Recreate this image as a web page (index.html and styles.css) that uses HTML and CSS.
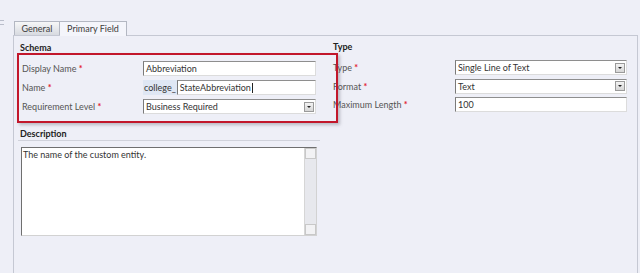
FILE: index.html
```html
<!DOCTYPE html>
<html>
  <head>
    <title>Field Properties - Primary Field</title>
    <link rel="stylesheet" href="styles.css">
  </head>
  <body>

	<div class="tabstrip">
		<div class="grip"></div>
		<div class="tab first">General</div>
		<div class="tab active">Primary Field</div>
	</div>

	<div class="panel">
		<div class="columns">
			<div class="col col-left">
				<div class="section-title">Schema</div>
				<div class="row">
					<div class="label">Display Name <span class="req">*</span></div>
					<div class="input">Abbreviation</div>
				</div>
				<div class="row">
					<div class="label">Name <span class="req">*</span></div>
					<div class="input-group">
						<span class="prefix">college_</span>
						<div class="input">StateAbbreviation<span class="caret"></span></div>
					</div>
				</div>
				<div class="row">
					<div class="label">Requirement Level <span class="req">*</span></div>
					<div class="select"><span>Business Required</span><span class="drop"></span></div>
				</div>

				<div class="section-title desc-title">Description</div>
				<div class="textarea">
					<div class="textarea-text">The name of the custom entity.</div>
					<div class="scrollbar">
						<div class="sb-btn"></div>
						<div class="sb-btn"></div>
					</div>
				</div>
			</div>

			<div class="col col-right">
				<div class="section-title plain">Type</div>
				<div class="row">
					<div class="label">Type <span class="req">*</span></div>
					<div class="select"><span>Single Line of Text</span><span class="drop"></span></div>
				</div>
				<div class="row">
					<div class="label">Format <span class="req">*</span></div>
					<div class="select"><span>Text</span><span class="drop"></span></div>
				</div>
				<div class="row">
					<div class="label">Maximum Length <span class="req">*</span></div>
					<div class="input">100</div>
				</div>
			</div>
		</div>

		<!-- red annotation box drawn over the schema fields -->
		<div class="highlight"></div>
	</div>

  </body>
</html>
```

FILE: styles.css
```css
      body { margin: 0; background: #eeeff7; font-family: Lato, "Open Sans", sans-serif; font-size: 9px; color: #555; overflow: hidden; }

      .tabstrip { display: flex; align-items: flex-start; padding-top: 21px; height: 14px; }
      .grip { width: 4px; height: 3px; margin-top: -1px; border-top: 1px solid #b9bdca; border-bottom: 1px solid #b9bdca; }
      .tab { box-sizing: border-box; width: 46px; height: 14px; line-height: 14px; text-align: center; border: 1px solid #b3b7c2; border-bottom: none; color: #3c3c3c; background: linear-gradient(#f7f7f8, #d7dae0); }
      .tab.first { margin-left: 10px; }
      .tab.active { width: 67px; height: 15px; background: #f4f5fb; border-left: none; position: relative; z-index: 1; }

      .panel { position: relative; margin-left: 13px; width: 623px; height: 237px; border: 1px solid #c5c8d3; border-bottom: none; }
      .columns { display: flex; gap: 13px; padding: 6px 0 0 4px; }
      .col-left { width: 302px; }
      .col-right { width: 296px; margin-top: -1px; }

      .section-title { height: 12px; line-height: 12px; padding-left: 2px; font-weight: bold; color: #222; border-bottom: 1px solid #d0d2db; margin-bottom: 6px; }
      .section-title.plain { border-bottom-color: transparent; padding-left: 0; }
      .desc-title { margin-top: 14px; }

      .row { display: flex; align-items: center; height: 15px; margin-bottom: 4px; padding-left: 4px; }
      .col-right .row { padding-left: 0; margin-bottom: 3.5px; }
      .label { width: 121px; white-space: nowrap; }
      .col-right .label { width: 122px; }
      .req { color: #e3202d; font-weight: bold; }

      .input, .select { box-sizing: border-box; height: 15px; line-height: 13px; padding-left: 2px; background: #fff; color: #333; border: 1px solid #dcdcdc; border-top-color: #8e8e8e; border-left-color: #7a7a7a; white-space: nowrap; }
      .col-left .input, .col-left .select { width: 173px; }
      .col-right .input, .col-right .select { width: 172px; }
      .select { display: flex; justify-content: space-between; align-items: center; }
      .drop { width: 10px; height: 10px; margin-right: 1px; box-sizing: border-box; border: 1px solid #9a9a9a; background: linear-gradient(#f3f3f3, #d6d6d6); position: relative; }
      .drop::after { content: ""; position: absolute; left: 2px; top: 3px; border-left: 2px solid transparent; border-right: 2px solid transparent; border-top: 2px solid #222; }

      .input-group { display: flex; width: 173px; height: 15px; }
      .prefix { width: 33px; line-height: 15px; padding-left: 1px; background: #dfe7f4; color: #333; }
      .input-group .input { width: 140px; }
      .caret { display: inline-block; width: 1px; height: 10px; margin-left: 1px; vertical-align: -2px; background: #222; }

      .textarea { display: flex; box-sizing: border-box; width: 296px; height: 89px; margin-left: 3px; background: #fff; border: 1px solid #d2d2d2; border-top-color: #6f6f6f; border-left-color: #6f6f6f; }
      .textarea-text { flex: 1; padding: 1px 1px; color: #333; }
      .scrollbar { width: 11px; display: flex; flex-direction: column; justify-content: space-between; background: #e7e8ed; border-left: 1px solid #d6d6d6; }
      .sb-btn { height: 11px; box-sizing: border-box; border: 1px solid #c8c8c8; background: #f2f2f4; }

      .highlight { position: absolute; left: 3px; top: 17px; width: 321px; height: 70px; box-sizing: border-box; border: 2px solid #c2172b; box-shadow: 2px 2px 3px rgba(90, 90, 100, 0.35); }
```
